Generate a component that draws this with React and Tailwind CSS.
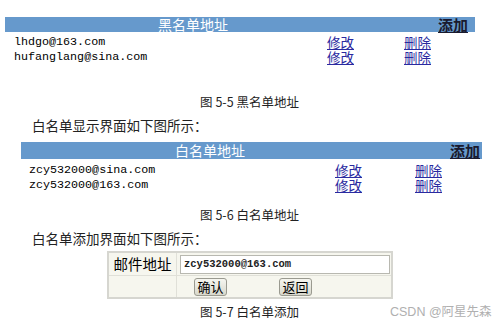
import React from "react";

const cjk = { fontFamily: '"Noto Sans CJK SC", "Noto Sans", sans-serif' };
const mono = { fontFamily: '"Liberation Mono", "Noto Sans CJK SC", monospace' };

function Row({ email, emailW, editW }) {
  return (
    <div className="flex h-[15px] items-center">
      <span className={`block h-[15px] ${emailW} text-[11.7px] leading-[15px] text-black`} style={mono}>{email}</span>
      <span className={`block h-[15px] ${editW} text-[13.5px] leading-[15px] text-[#2a2aa0] underline`}>修改</span>
      <span className="block h-[15px] text-[13.5px] leading-[15px] text-[#2a2aa0] underline">删除</span>
    </div>
  );
}

export default function App() {
  return (
    <div className="relative h-[324px] w-[499px] overflow-hidden bg-white text-black" style={cjk}>
      <div className="h-[17px]" />
      <div className="flex">
        <div className="ml-[5px] flex h-[15px] w-[470px] items-center bg-[#6699cc]">
          <span className="ml-[153px] block h-[15px] text-[14px] leading-[15px] text-white">黑名单地址</span>
          <span className="ml-auto mr-[7px] block h-[15px] text-[15px] font-bold leading-[15px] text-[#1a1a2e] underline">添加</span>
        </div>
      </div>
      <div className="ml-[14px] mt-[3px] flex flex-col">
        <Row email="lhdgo@163.com" emailW="w-[313px]" editW="w-[77px]" />
        <Row email="hufanglang@sina.com" emailW="w-[313px]" editW="w-[77px]" />
      </div>
      <div className="mt-[29px] h-[15px] text-center text-[12.5px] leading-[15px] text-[#222]">图 5-5 黑名单地址</div>
      <div className="ml-[32px] mt-[7px] h-[18px] text-[13.5px] leading-[18px] text-[#222]">白名单显示界面如下图所示：</div>
      <div className="mt-[8px] flex">
        <div className="ml-[21px] flex h-[17px] w-[461px] items-center bg-[#6699cc]">
          <span className="ml-[154px] block h-[17px] text-[14px] leading-[17px] text-white">白名单地址</span>
          <span className="ml-auto mr-[2px] block h-[17px] text-[15px] font-bold leading-[17px] text-[#1a1a2e] underline">添加</span>
        </div>
      </div>
      <div className="ml-[29px] mt-[4px] flex flex-col">
        <Row email="zcy532000@sina.com" emailW="w-[306px]" editW="w-[80px]" />
        <Row email="zcy532000@163.com" emailW="w-[306px]" editW="w-[80px]" />
      </div>
      <div className="mt-[14px] h-[15px] text-center text-[12.5px] leading-[15px] text-[#222]">图 5-6 白名单地址</div>
      <div className="ml-[32px] mt-[7px] h-[18px] text-[13.5px] leading-[18px] text-[#222]">白名单添加界面如下图所示：</div>
      <div className="mt-[4px] flex">
        <div className="ml-[107px] flex w-[286px] flex-col border-2 border-[#d6d6d0] bg-[#f6f6ee]">
          <div className="flex h-[23px] border-b border-[#e0e0d8]">
            <div className="flex w-[68px] items-center justify-center border-r border-[#e0e0d8] text-[14.5px] leading-none text-black">邮件地址</div>
            <div className="flex flex-1 items-center pl-[3px] pr-[1px]">
              <div className="flex h-[19px] w-full items-center border border-[#b8b8b0] bg-white pl-[3px]">
                <span className="text-[10.5px] font-bold leading-none text-[#222]" style={mono}>zcy532000@163.com</span>
              </div>
            </div>
          </div>
          <div className="flex h-[21px]">
            <div className="w-[68px] border-r border-[#e0e0d8]" />
            <div className="flex flex-1 items-center">
              <div className="ml-[17px] flex h-[18px] w-[33px] items-center justify-center rounded-[3px] border border-[#9a9a90] bg-gradient-to-b from-[#f6f6f0] to-[#d8d8cc] text-[13px] leading-none text-black">确认</div>
              <div className="ml-[52px] flex h-[18px] w-[33px] items-center justify-center rounded-[3px] border border-[#9a9a90] bg-gradient-to-b from-[#f6f6f0] to-[#d8d8cc] text-[13px] leading-none text-black">返回</div>
            </div>
          </div>
        </div>
      </div>
      <div className="relative mt-[5px] h-[15px]">
        <div className="text-center text-[12.5px] leading-[15px] text-[#222]">图 5-7 白名单添加</div>
        <div className="absolute left-[390px] top-[1px] text-[12.5px] leading-[14px] text-[#b0b0b0]" style={{ fontFamily: '"Liberation Sans", "Noto Sans CJK SC", sans-serif' }}>CSDN @阿星先森</div>
      </div>
    </div>
  );
}
